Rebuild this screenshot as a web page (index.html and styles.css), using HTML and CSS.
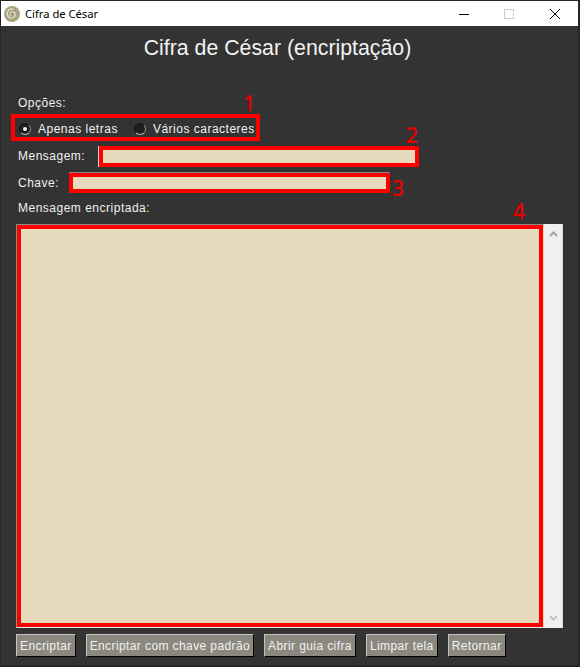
FILE: index.html
```html
<!DOCTYPE html>
<html lang="pt-br">
<head>
    <meta charset="UTF-8">
    <meta name="viewport" content="width=device-width, initial-scale=1.0">
    <title>Cifra de César</title>
    <link rel="stylesheet" href="styles.css">
</head>
<body>

<div class="window">
    <div class="titlebar">
        <svg class="app-icon" width="16" height="16" viewBox="0 0 16 16">
            <circle cx="8" cy="8" r="8" fill="#a8a482"/>
            <path d="M8 9.500a1.500 1.500 0 0 1-1.500-2a2.300 2.300 0 0 1 3.500-1.200a3.200 3.200 0 0 1 .5 4.500a4.500 4.500 0 0 1-6.300-.3a5 5 0 0 1 .8-6.500a5.500 5.500 0 0 1 4.500-.8" fill="none" stroke="#dedbc6" stroke-width="1.500"/>
            <circle cx="8" cy="8" r="1.200" fill="#8f8c72"/>
        </svg>
        <span class="app-name">Cifra de César</span>
        <div class="win-buttons">
            <svg class="win-min" width="10" height="10" viewBox="0 0 10 10"><path d="M0 5.500h10" stroke="#000" stroke-width="1"/></svg>
            <svg width="10" height="10" viewBox="0 0 10 10"><rect x=".5" y=".5" width="9" height="9" fill="none" stroke="#ccc"/></svg>
            <svg width="10" height="10" viewBox="0 0 10 10"><path d="M0 0l10 10M10 0L0 10" stroke="#000" stroke-width="1"/></svg>
        </div>
    </div>

    <div class="content">
        <h1 class="title">Cifra de César (encriptação)</h1>

        <div class="label options-label">Opções:</div>

        <div class="options">
            <span class="radio checked"></span>
            <span class="label option-text">Apenas letras</span>
            <span class="radio"></span>
            <span class="label">Vários caracteres</span>
        </div>

        <div class="field-row message-row">
            <span class="label field-label message-label">Mensagem:</span>
            <div class="field message-field"></div>
        </div>

        <div class="field-row key-row">
            <span class="label field-label key-label">Chave:</span>
            <div class="field key-field"></div>
        </div>

        <div class="label output-label">Mensagem encriptada:</div>

        <div class="output-row">
            <div class="output-frame">
                <div class="output-box"></div>
            </div>
            <div class="scrollbar">
                <svg width="9" height="6" viewBox="0 0 9 6"><path d="M1 5l3.500-3.500L8 5" fill="none" stroke="#a6a6a6" stroke-width="2"/></svg>
                <svg width="9" height="6" viewBox="0 0 9 6"><path d="M1 1l3.500 3.500L8 1" fill="none" stroke="#c4c4c4" stroke-width="2"/></svg>
            </div>
        </div>

        <div class="buttons">
            <button class="btn">Encriptar</button>
            <button class="btn">Encriptar com chave padrão</button>
            <button class="btn">Abrir guia cifra</button>
            <button class="btn">Limpar tela</button>
            <button class="btn">Retornar</button>
        </div>

        <!-- numeros escritos por cima da captura -->
        <span class="mark mark-1">1</span>
        <span class="mark mark-2">2</span>
        <span class="mark mark-3">3</span>
        <span class="mark mark-4">4</span>
    </div>
</div>

</body>
</html>
```

FILE: styles.css
```css
body {
    margin: 0;
    padding: 0;
    font-family: "Liberation Sans", Arial, sans-serif;
    background-color: #333333;
}
.window {
    box-sizing: border-box;
    width: 580px;
    height: 667px;
    display: flex;
    flex-direction: column;
    border-style: solid;
    border-color: #262626;
    border-width: 1px 2px 2px 1px;
    overflow: hidden;
}
.titlebar {
    height: 25px;
    flex: none;
    display: flex;
    align-items: center;
    background-color: #fff;
    padding-left: 3px;
}
.app-name {
    margin-left: 5px;
    font-family: "Noto Sans", sans-serif;
    font-size: 11.2px;
    color: #000;
}
.win-buttons {
    margin-left: auto;
    margin-right: 18px;
    display: flex;
    gap: 36px;
}
.win-min {
    margin-right: -1px;
}
.content {
    position: relative;
    flex: 1;
    background-color: #333333;
    padding-left: 15px;
}
.title {
    margin: 10px 0 0;
    padding-right: 39px;
    text-align: center;
    font-size: 21.3px;
    line-height: 24px;
    font-weight: normal;
    color: #f2f2f2;
}
.label {
    font-size: 12px;
    line-height: 16px;
    letter-spacing: .5px;
    color: #f0f0f0;
}
.options-label {
    margin: 35px 0 0 2px;
}
.options {
    box-sizing: border-box;
    width: 249px;
    height: 27px;
    margin: 3px 0 0 -5px;
    border: 4px solid #ff0000;
    display: flex;
    align-items: center;
    padding: 2px 0 0 4px;
    white-space: nowrap;
}
.radio {
    box-sizing: border-box;
    width: 12px;
    height: 12px;
    border-radius: 50%;
    background-color: #1e1e1e;
    border: 1px solid;
    border-color: #151515 #8a8a8a #b5b5b5 #151515;
    flex: none;
    margin-right: 7px;
    position: relative;
}
.radio.checked::after {
    content: "";
    position: absolute;
    left: 3px;
    top: 3px;
    width: 4px;
    height: 4px;
    border-radius: 50%;
    background-color: #f2f2f2;
}
.option-text {
    margin-right: 16px;
}
.field-row {
    display: flex;
    align-items: center;
}
.message-row {
    margin-top: 5px;
}
.key-row {
    margin-top: 6px;
}
.field-label {
    margin-left: 2px;
}
.message-label {
    width: 81px;
    padding-bottom: 2px;
}
.key-label {
    width: 51px;
}
.field {
    box-sizing: border-box;
    border: 4px solid #ff0000;
    background-color: #e8dabd;
}
.message-field {
    width: 320px;
    height: 21px;
    box-shadow: -1px 0 0 #d8d8d8;
}
.key-field {
    width: 321px;
    height: 20px;
    box-shadow: 0 -1px 0 #8a8880;
}
.output-label {
    margin: 7px 0 0 2px;
}
.output-row {
    display: flex;
    height: 404px;
    margin-top: 8px;
}
.output-frame {
    box-sizing: border-box;
    width: 528px;
    border: 1px solid;
    border-color: #8a8880 #e8dabd #e8e8e8 #8a8880;
}
.output-box {
    box-sizing: border-box;
    height: 100%;
    border: 4px solid #ff0000;
    background-color: #e8dabd;
}
.scrollbar {
    box-sizing: border-box;
    width: 19px;
    background-color: #f0f0f0;
    border-right: 1px solid #e8dabd;
    display: flex;
    flex-direction: column;
    align-items: center;
    justify-content: space-between;
    padding: 7px 0;
}
.buttons {
    display: flex;
    gap: 10px;
    margin-top: 6px;
}
.btn {
    box-sizing: border-box;
    height: 23px;
    padding: 0 3px;
    font-family: "Liberation Sans", Arial, sans-serif;
    font-size: 12px;
    letter-spacing: .4px;
    color: #f2f2f2;
    background-color: #8b887f;
    border: 1px solid;
    border-color: #c4c2bb #000 #000 #c4c2bb;
    white-space: nowrap;
}
.mark {
    position: absolute;
    font-family: "Open Sans", sans-serif;
    font-weight: 600;
    font-size: 21px;
    line-height: 24px;
    color: #e60000;
}
.mark-1 { left: 242px; top: 65px; }
.mark-2 { left: 405px; top: 97px; }
.mark-3 { left: 391px; top: 150px; }
.mark-4 { left: 512px; top: 173px; }
```
